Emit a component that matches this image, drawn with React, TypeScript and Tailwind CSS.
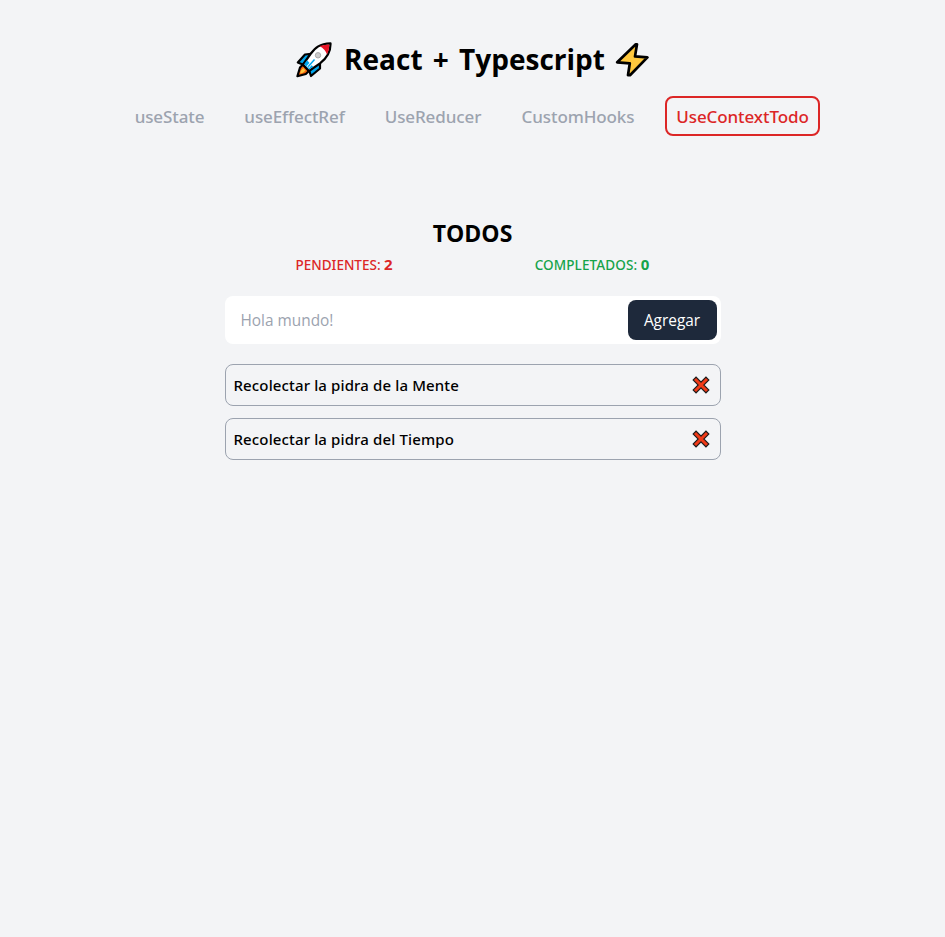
import { useState } from "react";

const tabs = [
  { name: "useState", box: "w-[89px]" },
  { name: "useEffectRef", box: "w-[121px]" },
  { name: "UseReducer", box: "w-[116px]" },
  { name: "CustomHooks", box: "w-[134px]" },
  { name: "UseContextTodo", box: "w-[155px]" },
];

const todos = ["Recolectar la pidra de la Mente", "Recolectar la pidra del Tiempo"];

function Rocket() {
  return (
    <svg width="36" height="36" viewBox="0 0 36 36" strokeLinejoin="round">
      <path d="M7 22.5 4 25.5 1.4 34.2 9.8 32 13 29Z" fill="#f7630c" stroke="#000" strokeWidth="2.2" />
      <path d="M7.2 26 5 28.5 4 31.5 7 30.8 9.5 28.5Z" fill="#ffc83d" />
      <path d="M15 11.8 9 12.5 1.8 20.5 8 23ZM24 20.5 24 26.5 15 34 13 28Z" fill="#00a6ed" stroke="#000" strokeWidth="2.2" />
      <path d="M7 22.5 14.5 12C19.5 5.5 23.5 1.8 34.5 1.4C34.8 10 31 16 24 21.3L13 29Z" fill="#fff" stroke="#000" strokeWidth="2.2" />
      <path d="M23.5 4Q28 2.5 33.4 2.5Q33.4 8 31 12.5Q29.5 7.5 23.5 4Z" fill="#e81224" />
      <path d="M11 18.3 8.2 22.3 13.2 27.6 17.2 24.7Z" fill="#00a6ed" />
      <path d="m12 25 6.3-7.2" stroke="#fff" strokeWidth="3.2" fill="none" />
      <path d="m12.2 24.7 6.3-7.2" stroke="#00a6ed" strokeWidth="1.5" fill="none" />
      <circle cx="22" cy="13.3" r="2.7" fill="#ccc" stroke="#aaa" />
    </svg>
  );
}

function Bolt() {
  return (
    <svg width="34" height="36" viewBox="0 0 34 36" strokeLinejoin="round">
      <path d="M20.8 2.3 2.2 20.3 14.8 21.3 13 33.2 15 33.2 32.4 15.4 20 14.4 22 2.3Z" fill="#ffc83d" stroke="#000" strokeWidth="2.7" />
    </svg>
  );
}

function Cross() {
  return (
    <svg width="18" height="18" viewBox="0 0 18 18">
      <path d="M2.2 2.2 15.8 15.8M15.8 2.2 2.2 15.8" stroke="#1b1b1b" strokeWidth="5.2" />
      <path d="M3 3 15 15M15 3 3 15" stroke="#f03a17" strokeWidth="3" />
    </svg>
  );
}

export default function App() {
  const [active, setActive] = useState("UseContextTodo");
  return (
    <div className="min-h-screen bg-gray-100 pt-10 font-['Open_Sans','Noto_Sans',sans-serif] text-black">
      <h1 className="flex h-10 items-center justify-center text-[28px] font-bold">
        <Rocket />
        <span className="mr-2.5 ml-3 -mt-0.5 whitespace-nowrap [word-spacing:3px]">React + Typescript</span>
        <Bolt />
      </h1>
      <nav className="mt-4 flex justify-center gap-5">
        {tabs.map((t) => (
          <button
            key={t.name}
            onClick={() => setActive(t.name)}
            className={`flex h-10 items-center justify-center rounded-lg border-2 pt-0.5 font-['Noto_Sans','Open_Sans',sans-serif] text-[17px] font-medium tracking-[-0.1px] whitespace-nowrap ${t.box} ${
              active === t.name ? "border-[#dc2626] text-[#dc2626]" : "border-transparent text-[#9ca3af]"
            }`}
          >
            {t.name}
          </button>
        ))}
      </nav>
      <main className="mx-auto mt-20 w-[496px]">
        <h2 className="h-9 text-center text-[23px] leading-[34px] font-bold">TODOS</h2>
        <div className="-mt-0.5 flex h-[30px] justify-around font-['Noto_Sans','Open_Sans',sans-serif] text-[13.5px] leading-7 font-medium text-[#dc2626]">
          <p className="whitespace-nowrap">
            PENDIENTES: <b className="text-[15px]">2</b>
          </p>
          <p className="tracking-[0.1px] whitespace-nowrap text-[#16a34a]">
            COMPLETADOS: <b className="text-[15px]">0</b>
          </p>
        </div>
        <form className="mt-4 flex h-12 rounded-lg bg-white p-1" onSubmit={(e) => e.preventDefault()}>
          <input
            className="min-w-0 flex-1 px-3 pt-0.5 text-[15.4px] outline-none placeholder:text-[#9ca3af]"
            placeholder="Hola mundo!"
          />
          <button className="h-10 w-[89px] rounded-lg bg-[#1e293b] pt-0.5 text-[15.4px] text-white">Agregar</button>
        </form>
        <ul className="mt-5 flex flex-col gap-3">
          {todos.map((t) => (
            <li
              key={t}
              className="flex h-[42px] items-center justify-between rounded-lg border border-[#9ca3af] pr-2.5 pl-2 font-['Noto_Sans','Open_Sans',sans-serif] text-[15px] font-medium tracking-[0.13px]"
            >
              <span>{t}</span>
              <Cross />
            </li>
          ))}
        </ul>
      </main>
    </div>
  );
}
